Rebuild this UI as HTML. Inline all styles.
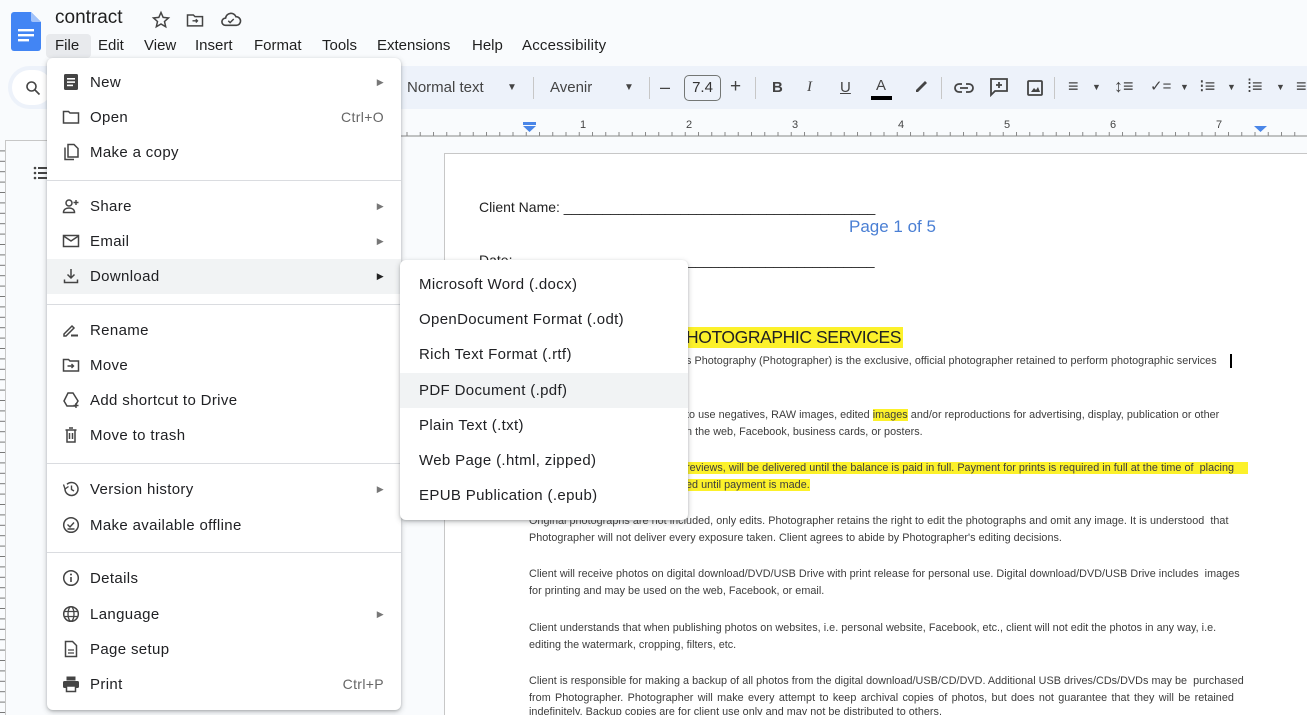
<!DOCTYPE html>
<html><head><meta charset="utf-8">
<style>
*{margin:0;padding:0;box-sizing:border-box}
html,body{width:1307px;height:715px;overflow:hidden}
body{position:relative;background:#f9fbfd;font-family:"Liberation Sans",Arial,sans-serif;color:#202124}
.a{position:absolute;white-space:nowrap}
.menu{position:absolute;background:#fff;border-radius:6px;box-shadow:0 2px 6px rgba(60,64,67,.3),0 1px 2px rgba(60,64,67,.2)}
.it{position:absolute;left:0;right:0;height:35px;font-size:15px;line-height:35px;letter-spacing:.35px}
.it .t{position:absolute;left:43px}
.it svg{position:absolute;left:15px;top:8px;width:18px;height:18px}
.it .ar{position:absolute;right:17px;top:0;font-size:9px;color:#777}
.it .sc{position:absolute;right:17px;color:#666;font-size:14px}
.sep{position:absolute;left:0;right:0;height:1px;background:#dadce0}
.sub .it .t{left:19px}
.dt{position:absolute;white-space:nowrap;font-size:10.8px;letter-spacing:.03px;color:#3c3c3c;line-height:12px}
.tb{position:absolute;font-size:15px;color:#444}
</style></head><body>
<div class="a" style="left:0;top:0;width:1307px;height:64px;background:#f9fbfd"></div>
<svg class="a" style="left:11px;top:12px" width="30" height="39" viewBox="0 0 30 39"><path d="M3 0h17l10 10v26a3 3 0 0 1-3 3H3a3 3 0 0 1-3-3V3a3 3 0 0 1 3-3z" fill="#4285f4"/><path d="M20 0l10 10h-8a2 2 0 0 1-2-2z" fill="#a1c2fa"/><rect x="7" y="17" width="16" height="2.4" fill="#fff"/><rect x="7" y="22" width="16" height="2.4" fill="#fff"/><rect x="7" y="27" width="11" height="2.4" fill="#fff"/></svg>
<div class="a" style="left:55px;top:7px;font-size:19px;color:#1f1f1f">contract</div>
<svg class="a" style="left:151px;top:10px" width="20" height="20" viewBox="0 0 24 24"><path d="M12 3l2.6 5.9 6.4.6-4.8 4.3 1.4 6.3L12 16.8 6.4 20.1l1.4-6.3L3 9.5l6.4-.6z" fill="none" stroke="#444" stroke-width="1.8"/></svg>
<svg class="a" style="left:185px;top:10px" width="20" height="20" viewBox="0 0 24 24"><path d="M3 6h7l2 2h9v11H3z" fill="none" stroke="#444" stroke-width="1.8"/><path d="M9 13h6m-2-2l2 2-2 2" fill="none" stroke="#444" stroke-width="1.6"/></svg>
<svg class="a" style="left:220px;top:9px" width="22" height="20" viewBox="0 0 24 22"><path d="M6 18a4 4 0 0 1 0-8 6 6 0 0 1 11.5-1.5A4.5 4.5 0 0 1 18 18z" fill="none" stroke="#444" stroke-width="1.8"/><path d="M9 13l2 2 4-4" fill="none" stroke="#444" stroke-width="1.6"/></svg>
<div class="a" style="left:46px;top:34px;width:45px;height:24px;background:#e8eaed;border-radius:4px"></div>
<div class="a" style="left:55px;top:37px;font-size:15px;color:#1f1f1f">File</div>
<div class="a" style="left:98px;top:37px;font-size:15px;color:#1f1f1f">Edit</div>
<div class="a" style="left:144px;top:37px;font-size:15px;color:#1f1f1f">View</div>
<div class="a" style="left:195px;top:37px;font-size:15px;color:#1f1f1f">Insert</div>
<div class="a" style="left:254px;top:37px;font-size:15px;color:#1f1f1f">Format</div>
<div class="a" style="left:322px;top:37px;font-size:15px;color:#1f1f1f">Tools</div>
<div class="a" style="left:377px;top:37px;font-size:15px;color:#1f1f1f">Extensions</div>
<div class="a" style="left:472px;top:37px;font-size:15px;color:#1f1f1f">Help</div>
<div class="a" style="left:522px;top:37px;font-size:15px;color:#1f1f1f;letter-spacing:.2px">Accessibility</div>
<div class="a" style="left:8px;top:66px;width:1320px;height:43px;background:#edf2fa;border-radius:22px"></div>
<div class="a" style="left:12px;top:70px;width:40px;height:35px;background:#fff;border-radius:18px"></div>
<svg class="a" style="left:25px;top:80px" width="16" height="16" viewBox="0 0 16 16"><circle cx="6.5" cy="6.5" r="4.5" fill="none" stroke="#444" stroke-width="1.6"/><path d="M10 10l4.5 4.5" stroke="#444" stroke-width="1.6"/></svg>
<div class="tb" style="left:407px;top:79px">Normal text</div>
<div class="tb" style="left:507px;top:82px;font-size:10px">▼</div>
<div class="a" style="left:533px;top:77px;width:1px;height:22px;background:#c7c7c7"></div>
<div class="tb" style="left:550px;top:79px">Avenir</div>
<div class="tb" style="left:624px;top:82px;font-size:10px">▼</div>
<div class="a" style="left:649px;top:77px;width:1px;height:22px;background:#c7c7c7"></div>
<div class="tb" style="left:660px;top:77px;font-size:18px">–</div>
<div class="a" style="left:684px;top:75px;width:37px;height:26px;border:1px solid #747775;border-radius:5px;font-size:15px;text-align:center;line-height:24px;color:#333">7.4</div>
<div class="tb" style="left:730px;top:76px;font-size:19px">+</div>
<div class="a" style="left:755px;top:77px;width:1px;height:22px;background:#c7c7c7"></div>
<div class="tb" style="left:772px;top:79px;font-weight:bold">B</div>
<div class="tb" style="left:807px;top:79px;font-style:italic;font-family:'Liberation Serif'">I</div>
<div class="tb" style="left:840px;top:79px;text-decoration:underline">U</div>
<div class="tb" style="left:876px;top:77px">A</div>
<div class="a" style="left:871px;top:96px;width:21px;height:4px;background:#000"></div>
<svg class="a" style="left:912px;top:77px" width="18" height="18" viewBox="0 0 18 18"><path d="M4 13l9-9 2 2-9 9H4z" fill="#444"/></svg>
<div class="a" style="left:941px;top:77px;width:1px;height:22px;background:#c7c7c7"></div>
<svg class="a" style="left:954px;top:80px" width="20" height="16" viewBox="0 0 20 16"><path d="M8 4H5a4 4 0 0 0 0 8h3M12 4h3a4 4 0 0 1 0 8h-3M6 8h8" fill="none" stroke="#444" stroke-width="1.8"/></svg>
<svg class="a" style="left:989px;top:77px" width="20" height="20" viewBox="0 0 20 20"><path d="M2 2h16v12H6l-4 4z" fill="none" stroke="#444" stroke-width="1.8"/><path d="M10 5v6M7 8h6" stroke="#444" stroke-width="1.8"/></svg>
<svg class="a" style="left:1026px;top:79px" width="18" height="18" viewBox="0 0 18 18"><rect x="2" y="2" width="14" height="14" rx="1" fill="none" stroke="#444" stroke-width="1.8"/><path d="M5 13l3-4 2 2 2-3 2 5z" fill="#444"/></svg>
<div class="a" style="left:1054px;top:77px;width:1px;height:22px;background:#c7c7c7"></div>
<div class="tb" style="left:1068px;top:76px;font-size:18px">≡</div>
<div class="tb" style="left:1092px;top:82px;font-size:9px">▼</div>
<div class="tb" style="left:1114px;top:76px;font-size:18px">↕≡</div>
<div class="tb" style="left:1150px;top:77px;font-size:15px">✓=</div>
<div class="tb" style="left:1180px;top:82px;font-size:9px">▼</div>
<div class="tb" style="left:1199px;top:76px;font-size:18px">⁝≡</div>
<div class="tb" style="left:1227px;top:82px;font-size:9px">▼</div>
<div class="tb" style="left:1247px;top:76px;font-size:18px">⁞≡</div>
<div class="tb" style="left:1276px;top:82px;font-size:9px">▼</div>
<div class="tb" style="left:1296px;top:76px;font-size:18px">≡</div>
<svg class="a" style="left:0;top:110px" width="1307" height="30">
<line x1="380" y1="26" x2="1307" y2="26" stroke="#888" stroke-width="1"/>
<g font-size="11" fill="#444" font-family="Liberation Sans" text-anchor="middle">
<text x="583" y="18">1</text><text x="689" y="18">2</text><text x="795" y="18">3</text><text x="901" y="18">4</text><text x="1007" y="18">5</text><text x="1113" y="18">6</text><text x="1219" y="18">7</text>
</g>
<path d="M523 12h13v3h-13zM523 16h13l-6.5 6z" fill="#4a86e8"/>
<path d="M1254 16h13l-6.5 6z" fill="#4a86e8"/>
</svg>
<svg class="a" style="left:380px;top:128px" width="927" height="8">
<defs><pattern id="tk" width="13.25" height="8" patternUnits="userSpaceOnUse"><line x1="0.5" y1="4" x2="0.5" y2="8" stroke="#888"/></pattern></defs>
<rect width="927" height="8" fill="url(#tk)"/></svg>
<div class="a" style="left:5px;top:140px;width:200px;height:575px;border-left:1px solid #c7c7c7;border-top:1px solid #c7c7c7"></div>
<svg class="a" style="left:0;top:140px" width="6" height="575"><defs><pattern id="vt" width="6" height="10.4" patternUnits="userSpaceOnUse"><line x1="0" y1="0.5" x2="5" y2="0.5" stroke="#777"/></pattern></defs><rect y="4" width="6" height="571" fill="url(#vt)"/></svg>
<svg class="a" style="left:33px;top:165px" width="16" height="16" viewBox="0 0 16 16"><g fill="#444"><circle cx="2" cy="3" r="1.3"/><circle cx="2" cy="8" r="1.3"/><circle cx="2" cy="13" r="1.3"/><rect x="5" y="2" width="11" height="2"/><rect x="5" y="7" width="11" height="2"/><rect x="5" y="12" width="11" height="2"/></g></svg>
<div class="a" style="left:444px;top:153px;width:863px;height:562px;background:#fff;border-left:1px solid #c7c7c7;border-top:1px solid #c7c7c7"></div>
<div class="a" style="left:479px;top:199px;font-size:14px;color:#222">Client Name: ________________________________________</div>
<div class="a" style="left:849px;top:217px;font-size:17px;color:#4a7fd4">Page 1 of 5</div>
<div class="a" style="left:479px;top:252px;font-size:14px;color:#222">Date: ______________________________________________</div>
<div class="a" style="left:684px;top:327px;font-size:17.5px;background:#fcf12a;color:#222;letter-spacing:-.4px;padding:0 2px">HOTOGRAPHIC SERVICES</div>
<div class="dt" style="left:686px;top:355px">s Photography (Photographer) is the exclusive, official photographer retained to perform photographic services</div>
<div class="a" style="left:1230px;top:354px;width:2px;height:14px;background:#000"></div>
<div class="dt" style="left:686px;top:409px">to use negatives, RAW images, edited <span style="background:#fcf12a">images</span> and/or reproductions for advertising, display, publication or other</div>
<div class="dt" style="left:686px;top:426px">n the web, Facebook, business cards, or posters.</div>
<div class="dt" style="left:686px;top:462px;background:#fcf12a;width:562px">reviews, will be delivered until the balance is paid in full. Payment for prints is required in full at the time of &nbsp;placing</div>
<div class="dt" style="left:686px;top:479px;background:#fcf12a">ed until payment is made.</div>
<div class="dt" style="left:529px;top:515px">Original photographs are not included, only edits. Photographer retains the right to edit the photographs and omit any image. It is understood &nbsp;that</div>
<div class="dt" style="left:529px;top:532px">Photographer will not deliver every exposure taken. Client agrees to abide by Photographer's editing decisions.</div>
<div class="dt" style="left:529px;top:568px">Client will receive photos on digital download/DVD/USB Drive with print release for personal use. Digital download/DVD/USB Drive includes &nbsp;images</div>
<div class="dt" style="left:529px;top:585px">for printing and may be used on the web, Facebook, or email.</div>
<div class="dt" style="left:529px;top:622px">Client understands that when publishing photos on websites, i.e. personal website, Facebook, etc., client will not edit the photos in any way, i.e.</div>
<div class="dt" style="left:529px;top:639px">editing the watermark, cropping, filters, etc.</div>
<div class="dt" style="left:529px;top:675px">Client is responsible for making a backup of all photos from the digital download/USB/CD/DVD. Additional USB drives/CDs/DVDs may be &nbsp;purchased</div>
<div class="dt" style="left:529px;top:692px;word-spacing:1.3px">from Photographer. Photographer will make every attempt to keep archival copies of photos, but does not guarantee that they will be retained</div>
<div class="dt" style="left:529px;top:706px;height:9px;overflow:hidden">indefinitely. Backup copies are for client use only and may not be distributed to others.</div>
<div class="menu" style="left:47px;top:58px;width:354px;height:652px">
<div class="it" style="top:7px"><svg viewBox="0 0 18 18"><rect x="2" y="1" width="14" height="16" rx="1.5" fill="#444"/><rect x="5" y="5" width="8" height="1.6" fill="#fff"/><rect x="5" y="8.3" width="8" height="1.6" fill="#fff"/><rect x="5" y="11.6" width="6" height="1.6" fill="#fff"/></svg><span class="t">New</span><span class="ar">▶</span></div>
<div class="it" style="top:42px"><svg viewBox="0 0 18 18"><path d="M1.5 3.5h5l1.5 1.5h8.5v10h-15z" fill="none" stroke="#444" stroke-width="1.5"/></svg><span class="t">Open</span><span class="sc">Ctrl+O</span></div>
<div class="it" style="top:77px"><svg viewBox="0 0 18 18"><path d="M6 1.5h6l4 4V14H6z" fill="none" stroke="#444" stroke-width="1.5"/><path d="M3 4.5v12h9" fill="none" stroke="#444" stroke-width="1.5"/></svg><span class="t">Make a copy</span></div>
<div class="sep" style="top:122px"></div>
<div class="it" style="top:131px"><svg viewBox="0 0 18 18"><circle cx="7" cy="6" r="3" fill="none" stroke="#444" stroke-width="1.5"/><path d="M1.5 15.5c0-3 2.5-4.5 5.5-4.5s5.5 1.5 5.5 4.5z" fill="none" stroke="#444" stroke-width="1.5"/><path d="M14 3v5M11.5 5.5h5" stroke="#444" stroke-width="1.4"/></svg><span class="t">Share</span><span class="ar">▶</span></div>
<div class="it" style="top:166px"><svg viewBox="0 0 18 18"><rect x="1.5" y="3.5" width="15" height="11" fill="none" stroke="#444" stroke-width="1.5"/><path d="M1.5 4l7.5 5 7.5-5" fill="none" stroke="#444" stroke-width="1.5"/></svg><span class="t">Email</span><span class="ar">▶</span></div>
<div class="it" style="top:201px;background:#f1f3f4"><svg viewBox="0 0 18 18"><path d="M9 2v9M5.5 7.5L9 11l3.5-3.5M2.5 12.5v3h13v-3" fill="none" stroke="#444" stroke-width="1.5"/></svg><span class="t">Download</span><span class="ar" style="color:#222">▶</span></div>
<div class="sep" style="top:246px"></div>
<div class="it" style="top:255px"><svg viewBox="0 0 18 18"><path d="M2 13l8-8 2 2-8 8H2z" fill="none" stroke="#444" stroke-width="1.5"/><rect x="9" y="13.5" width="7" height="2" fill="#444"/></svg><span class="t">Rename</span></div>
<div class="it" style="top:290px"><svg viewBox="0 0 18 18"><path d="M1.5 3.5h5l1.5 1.5h8.5v10h-15z" fill="none" stroke="#444" stroke-width="1.5"/><path d="M5.5 10h6M9.5 8l2 2-2 2" fill="none" stroke="#444" stroke-width="1.4"/></svg><span class="t">Move</span></div>
<div class="it" style="top:325px"><svg viewBox="0 0 18 18"><path d="M6 2h5l5 8-3 5H5l-3-5z" fill="none" stroke="#444" stroke-width="1.5"/><path d="M14 12v5M11.5 14.5h5" stroke="#444" stroke-width="1.4"/></svg><span class="t">Add shortcut to Drive</span></div>
<div class="it" style="top:360px"><svg viewBox="0 0 18 18"><path d="M3.5 4h11M7 2h4M5 4v12h8V4M7.5 7v6M10.5 7v6" fill="none" stroke="#444" stroke-width="1.5"/></svg><span class="t">Move to trash</span></div>
<div class="sep" style="top:405px"></div>
<div class="it" style="top:414px"><svg viewBox="0 0 18 18"><path d="M3 9a6.5 6.5 0 1 0 2-4.7" fill="none" stroke="#444" stroke-width="1.5"/><path d="M1.5 4.5L3 9l3.5-2.5" fill="none" stroke="#444" stroke-width="1.3"/><path d="M9.5 5.5v4l2.5 1.5" fill="none" stroke="#444" stroke-width="1.4"/></svg><span class="t">Version history</span><span class="ar">▶</span></div>
<div class="it" style="top:450px"><svg viewBox="0 0 18 18"><circle cx="9" cy="9" r="7.3" fill="none" stroke="#444" stroke-width="1.5"/><path d="M5.5 8.5l2.5 2.5 4-4.5M5.5 13h7" fill="none" stroke="#444" stroke-width="1.4"/></svg><span class="t">Make available offline</span></div>
<div class="sep" style="top:494px"></div>
<div class="it" style="top:503px"><svg viewBox="0 0 18 18"><circle cx="9" cy="9" r="7.3" fill="none" stroke="#444" stroke-width="1.5"/><path d="M9 8v5" stroke="#444" stroke-width="1.6"/><circle cx="9" cy="5.5" r="1" fill="#444"/></svg><span class="t">Details</span></div>
<div class="it" style="top:539px"><svg viewBox="0 0 18 18"><circle cx="9" cy="9" r="7.3" fill="none" stroke="#444" stroke-width="1.5"/><ellipse cx="9" cy="9" rx="3" ry="7.3" fill="none" stroke="#444" stroke-width="1.3"/><path d="M2 6.5h14M2 11.5h14" stroke="#444" stroke-width="1.3"/></svg><span class="t">Language</span><span class="ar">▶</span></div>
<div class="it" style="top:574px"><svg viewBox="0 0 18 18"><path d="M3.5 1.5h7l4 4v11h-11z" fill="none" stroke="#444" stroke-width="1.5"/><path d="M6 10h6M6 13h6" stroke="#444" stroke-width="1.3"/></svg><span class="t">Page setup</span></div>
<div class="it" style="top:609px"><svg viewBox="0 0 18 18"><rect x="4.5" y="1.5" width="9" height="4" fill="#444"/><rect x="1" y="6" width="16" height="7" rx="1.5" fill="#444"/><rect x="4.5" y="11" width="9" height="5.5" fill="#fff" stroke="#444" stroke-width="1.5"/></svg><span class="t">Print</span><span class="sc">Ctrl+P</span></div>
</div>
<div class="menu sub" style="left:400px;top:260px;width:288px;height:260px">
<div class="it" style="top:7px"><span class="t">Microsoft Word (.docx)</span></div>
<div class="it" style="top:42px"><span class="t">OpenDocument Format (.odt)</span></div>
<div class="it" style="top:77px"><span class="t">Rich Text Format (.rtf)</span></div>
<div class="it" style="top:113px;background:#f1f3f4"><span class="t">PDF Document (.pdf)</span></div>
<div class="it" style="top:148px"><span class="t">Plain Text (.txt)</span></div>
<div class="it" style="top:183px"><span class="t">Web Page (.html, zipped)</span></div>
<div class="it" style="top:218px"><span class="t">EPUB Publication (.epub)</span></div>
</div>
</body></html>
